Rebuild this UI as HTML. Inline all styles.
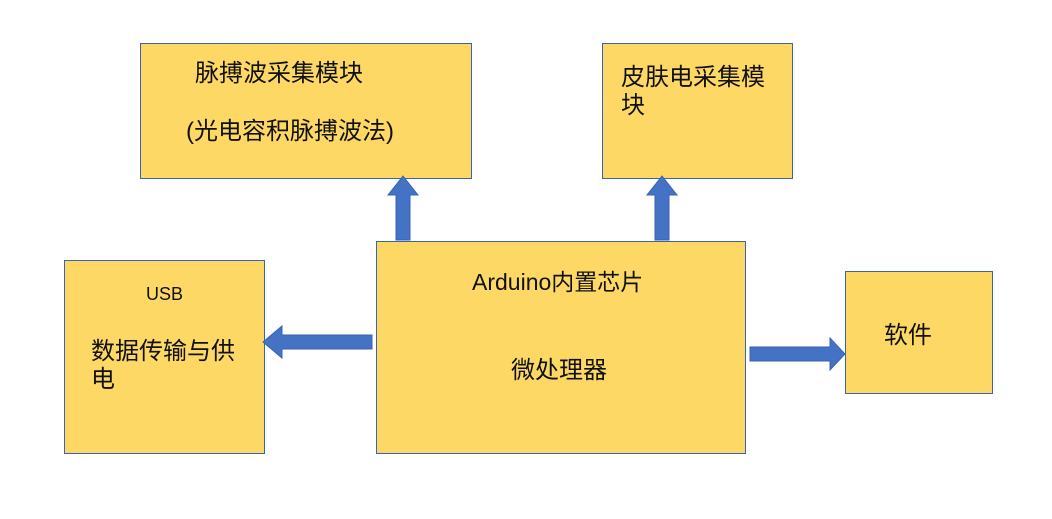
<!DOCTYPE html>
<html><head><meta charset="utf-8"><style>
body{margin:0;width:1052px;height:519px;background:#fff;position:relative;overflow:hidden;font-family:"Liberation Sans","Noto Sans CJK SC",sans-serif;color:#111}
.b{position:absolute;background:#FDD865;border:1.3px solid #3A63B0;box-sizing:border-box}
.t{position:absolute;white-space:nowrap;line-height:1}
</style></head><body>
<div class="b" style="left:140px;top:43px;width:332px;height:136px"></div>
<div class="b" style="left:602px;top:43px;width:191px;height:136px"></div>
<div class="b" style="left:64px;top:260px;width:201px;height:194px"></div>
<div class="b" style="left:376px;top:241px;width:370px;height:213px"></div>
<div class="b" style="left:845px;top:271px;width:148px;height:123px"></div>
<svg style="position:absolute;left:0;top:0" width="1052" height="519">
<g fill="#4472C4" stroke="#3A63B0" stroke-width="1">
<polygon points="396,240 396,195 388,195 403,176 418,195 410,195 410,240"/>
<polygon points="655,240 655,195 647,195 662,176 677,195 669,195 669,240"/>
<polygon points="372,335 282,335 282,326 263,342 282,358 282,349 372,349"/>
<polygon points="750,347 830,347 830,338 845,354 830,370 830,361 750,361"/>
</g></svg>
<div class="t" style="left:195px;top:62px;font-size:24px">脉搏波采集模块</div>
<div class="t" style="left:186px;top:120px;font-size:24px">(光电容积脉搏波法)</div>
<div class="t" style="left:621px;top:66px;font-size:24px">皮肤电采集模</div>
<div class="t" style="left:621px;top:94px;font-size:24px">块</div>
<div class="t" style="left:472px;top:271px;font-size:23px">Arduino内置芯片</div>
<div class="t" style="left:511px;top:359px;font-size:24px">微处理器</div>
<div class="t" style="left:146px;top:285px;font-size:18px">USB</div>
<div class="t" style="left:91px;top:340px;font-size:24px">数据传输与供</div>
<div class="t" style="left:91px;top:368px;font-size:24px">电</div>
<div class="t" style="left:884px;top:324px;font-size:24px">软件</div>
</body></html>
